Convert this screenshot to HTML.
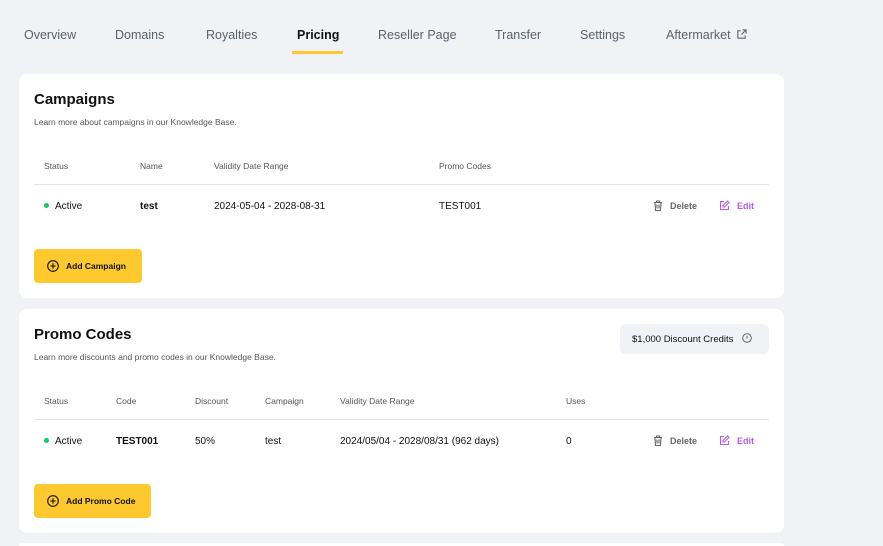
<!DOCTYPE html><html><head><style>
*{margin:0;padding:0;box-sizing:border-box}
html{width:883px;height:546px;overflow:hidden}
body{width:883px;height:546px;background:#f1f2f6;font-family:"Liberation Sans",sans-serif;position:relative;overflow:hidden;color:#111}
.a{position:absolute;white-space:nowrap}
.tab{font-size:12.5px;color:#5b6270;top:28px}
.card{position:absolute;left:19px;width:765px;background:#fff;border-radius:8px}
.h{font-size:15px;font-weight:bold;color:#111}
.s{font-size:8.5px;color:#555}
.th{font-size:8.5px;color:#555}
.td{font-size:10px;color:#111}
.line{position:absolute;left:15px;width:735px;height:1px;background:#e3e4ea}
.btn{position:absolute;left:15px;height:34px;background:#fdc92f;border-radius:4px;font-size:8.5px;font-weight:bold;display:flex;align-items:center;padding-left:13px;gap:7px}
.del{font-size:9px;font-weight:bold;color:#666}
.ed{font-size:9px;font-weight:bold;color:#b65cf0}
.dot{display:inline-block;width:5px;height:5px;border-radius:50%;background:#1fc16b;margin-right:6px;vertical-align:middle;position:relative;top:-1px}
</style></head><body>
<div class="a tab" style="left:24px">Overview</div>
<div class="a tab" style="left:115px">Domains</div>
<div class="a tab" style="left:206px">Royalties</div>
<div class="a tab" style="left:297px;color:#111;font-weight:bold">Pricing</div>
<div class="a" style="left:292px;top:51px;width:51px;height:3px;background:#fdc92f"></div>
<div class="a tab" style="left:378px">Reseller Page</div>
<div class="a tab" style="left:495px">Transfer</div>
<div class="a tab" style="left:580px">Settings</div>
<div class="a tab" style="left:666px">Aftermarket <svg width="11" height="11" viewBox="0 0 12 12" style="vertical-align:-1px;margin-left:2px" fill="none" stroke="#5b6270" stroke-width="1.2"><path d="M5 2H2v8h8V7M7 1h4v4M11 1L6 6"/></svg></div>

<div class="card" style="top:74px;height:224px">
<div class="a h" style="left:15px;top:17px">Campaigns</div>
<div class="a s" style="left:15px;top:43px">Learn more about campaigns in our Knowledge Base.</div>
<div class="a th" style="left:25px;top:87px">Status</div>
<div class="a th" style="left:121px;top:87px">Name</div>
<div class="a th" style="left:195px;top:87px">Validity Date Range</div>
<div class="a th" style="left:420px;top:87px">Promo Codes</div>
<div class="line" style="top:110px"></div>
<div class="a td" style="left:25px;top:127px"><span class="dot"></span>Active</div>
<div class="a td" style="left:121px;top:127px;font-weight:bold">test</div>
<div class="a td" style="left:195px;top:127px">2024-05-04 - 2028-08-31</div>
<div class="a td" style="left:420px;top:127px">TEST001</div>
<div class="a del" style="left:634px;top:126px"><svg width="10" height="11" viewBox="0 0 10 11" fill="none" stroke="#666" stroke-width="1.1" style="vertical-align:-2px;margin-right:7px"><path d="M1 2.5h8M3.5 2.5V1h3v1.5M2 2.5l.5 8h5l.5-8M4 4.5v4M6 4.5v4"/></svg>Delete</div>
<div class="a ed" style="left:700px;top:126px"><svg width="11" height="11" viewBox="0 0 11 11" fill="none" stroke="#b65cf0" stroke-width="1.1" style="vertical-align:-2px;margin-right:7px"><path d="M5 1.5H1.5v8h8V6M8.5 1l1.5 1.5L5.5 7H4V5.5z"/></svg>Edit</div>
<div class="btn" style="top:175px;width:108px"><svg width="12" height="12" viewBox="0 0 12 12" fill="none" stroke="#111" stroke-width="1.1"><circle cx="6" cy="6" r="5.3"/><path d="M6 3.3v5.4M3.3 6h5.4"/></svg>Add Campaign</div>
</div>

<div class="card" style="top:309px;height:224px">
<div class="a h" style="left:15px;top:17px">Promo Codes</div>
<div class="a s" style="left:15px;top:43px">Learn more discounts and promo codes in our Knowledge Base.</div>
<div class="a" style="left:601px;top:15px;width:149px;height:30px;background:#f1f2f6;border-radius:6px;font-size:9.5px;padding:9px 0 0 12px">$1,000 Discount Credits <svg width="10" height="10" viewBox="0 0 10 10" fill="none" stroke="#666" style="vertical-align:-1px;margin-left:6px"><circle cx="5" cy="5" r="4.3"/><path d="M5 3v2.5"/></svg></div>
<div class="a th" style="left:25px;top:87px">Status</div>
<div class="a th" style="left:97px;top:87px">Code</div>
<div class="a th" style="left:176px;top:87px">Discount</div>
<div class="a th" style="left:246px;top:87px">Campaign</div>
<div class="a th" style="left:321px;top:87px">Validity Date Range</div>
<div class="a th" style="left:547px;top:87px">Uses</div>
<div class="line" style="top:110px"></div>
<div class="a td" style="left:25px;top:127px"><span class="dot"></span>Active</div>
<div class="a td" style="left:97px;top:127px;font-weight:bold">TEST001</div>
<div class="a td" style="left:176px;top:127px">50%</div>
<div class="a td" style="left:246px;top:127px">test</div>
<div class="a td" style="left:321px;top:127px">2024/05/04 - 2028/08/31 (962 days)</div>
<div class="a td" style="left:547px;top:127px">0</div>
<div class="a del" style="left:634px;top:126px"><svg width="10" height="11" viewBox="0 0 10 11" fill="none" stroke="#666" stroke-width="1.1" style="vertical-align:-2px;margin-right:7px"><path d="M1 2.5h8M3.5 2.5V1h3v1.5M2 2.5l.5 8h5l.5-8M4 4.5v4M6 4.5v4"/></svg>Delete</div>
<div class="a ed" style="left:700px;top:126px"><svg width="11" height="11" viewBox="0 0 11 11" fill="none" stroke="#b65cf0" stroke-width="1.1" style="vertical-align:-2px;margin-right:7px"><path d="M5 1.5H1.5v8h8V6M8.5 1l1.5 1.5L5.5 7H4V5.5z"/></svg>Edit</div>
<div class="btn" style="top:175px;width:117px"><svg width="12" height="12" viewBox="0 0 12 12" fill="none" stroke="#111" stroke-width="1.1"><circle cx="6" cy="6" r="5.3"/><path d="M6 3.3v5.4M3.3 6h5.4"/></svg>Add Promo Code</div>
</div>
<div class="card" style="top:543px;height:3px;border-radius:8px 8px 0 0"></div>
</body></html>
